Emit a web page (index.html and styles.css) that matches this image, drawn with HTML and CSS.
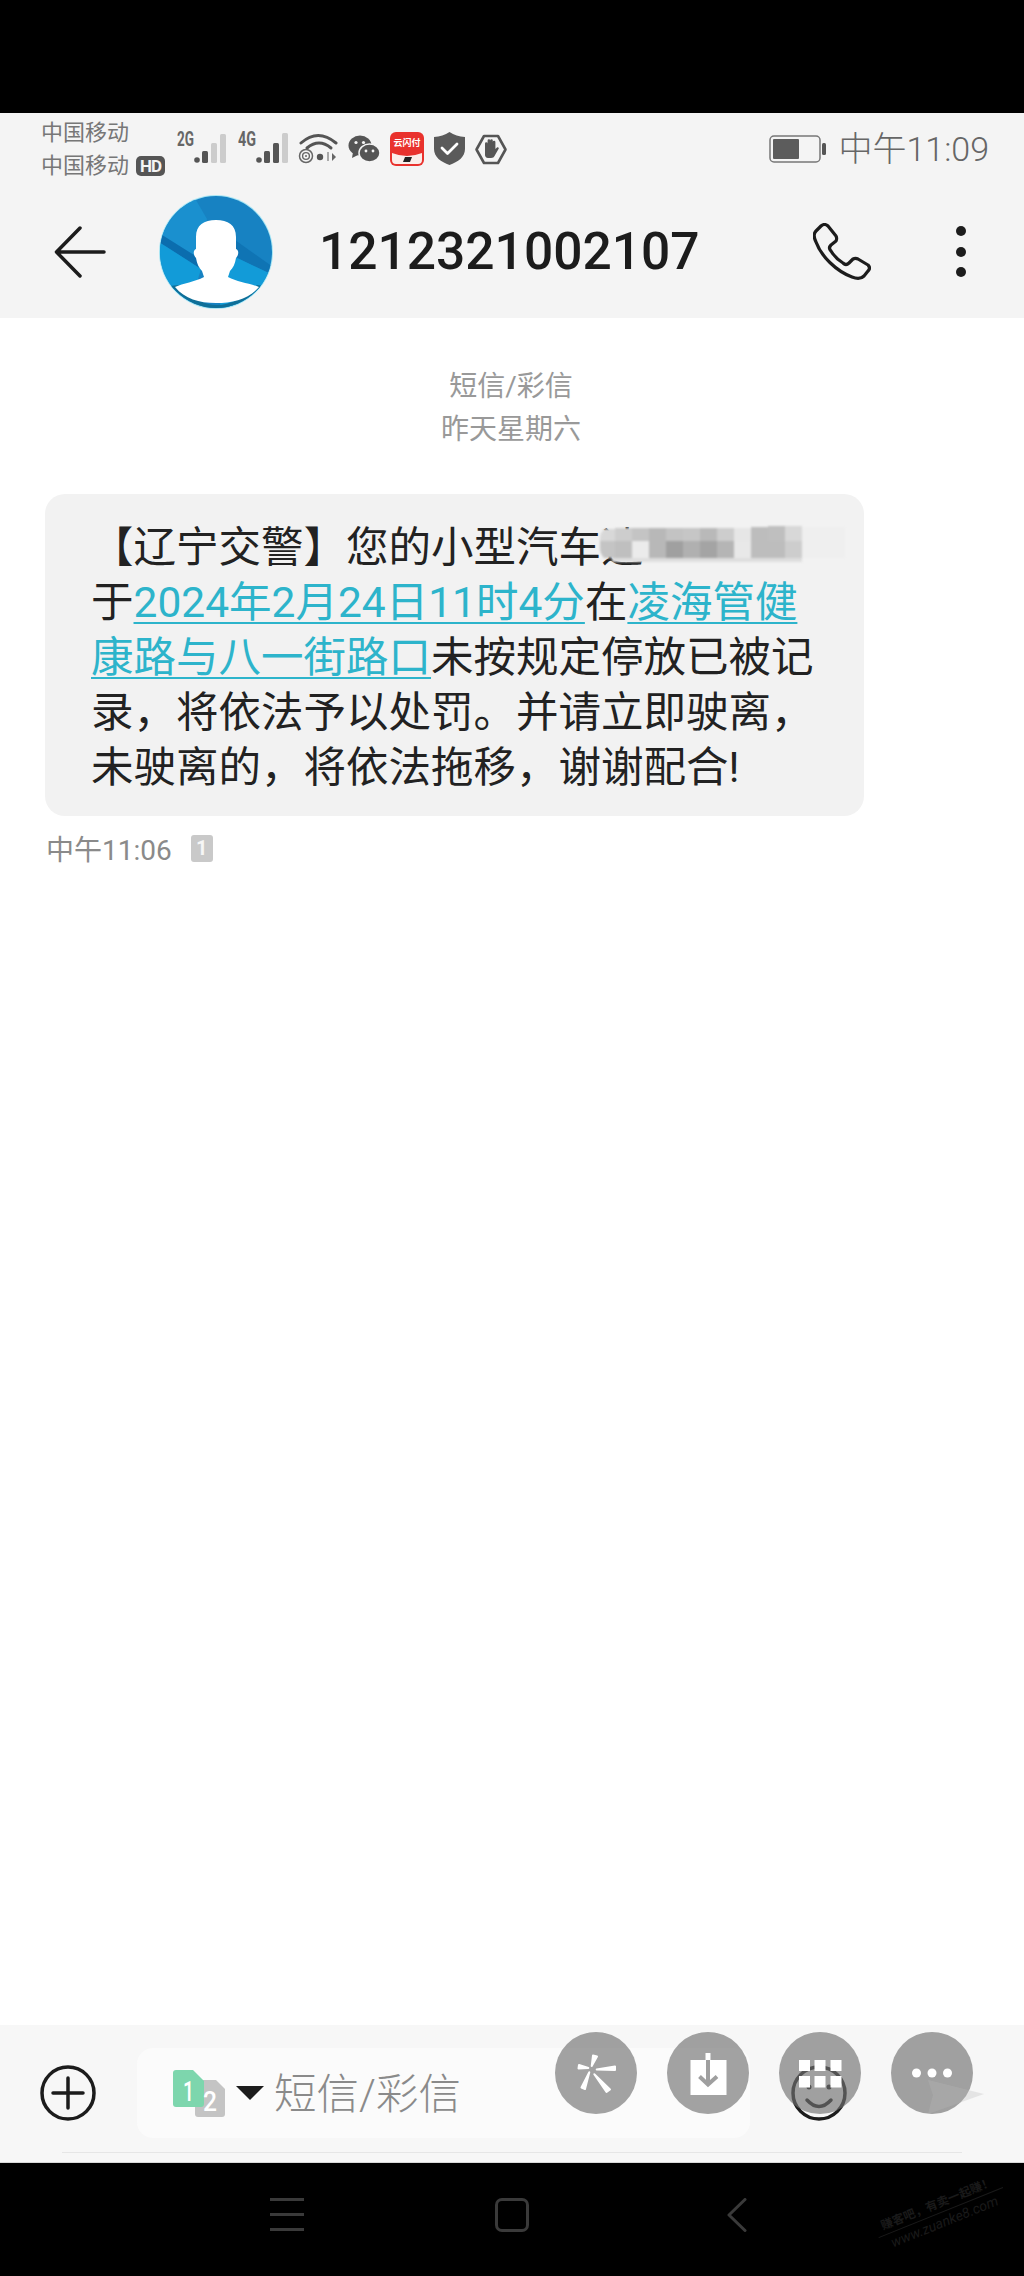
FILE: index.html
```html
<!DOCTYPE html>
<html lang="zh-CN">
<head>
<meta charset="utf-8">
<title>短信/彩信</title>
<link rel="stylesheet" href="styles.css">
</head>
<body>
<div class="page">
  <div class="top-black"></div>

  <div class="status">
    <div class="carriers">
      <div class="carrier">中国移动</div>
      <div class="carrier">中国移动<span class="hd">HD</span></div>
    </div>
    <div class="status-icons">
      <svg class="i-sig" viewBox="0 -8 51 44">
        <text class="net" x="0" y="17" textLength="17" lengthAdjust="spacingAndGlyphs">2G</text>
        <circle cx="20" cy="31" r="2.800" fill="#555"/>
        <rect x="25" y="22" width="6" height="12" rx="1.500" fill="#555"/>
        <rect x="34" y="14" width="6" height="20" rx="1.500" fill="#ccc"/>
        <rect x="43" y="5" width="6" height="29" rx="1.500" fill="#ccc"/>
      </svg>
      <svg class="i-sig2" viewBox="0 -8 50 44">
        <text class="net" x="0" y="17" textLength="18" lengthAdjust="spacingAndGlyphs">4G</text>
        <circle cx="21" cy="31" r="2.800" fill="#555"/>
        <rect x="26" y="22" width="6" height="12" rx="1.500" fill="#555"/>
        <rect x="35" y="14" width="6" height="20" rx="1.500" fill="#555"/>
        <rect x="44" y="4" width="6" height="30" rx="1.500" fill="#ccc"/>
      </svg>
      <svg class="i-wifi" viewBox="0 0 40 32">
        <path d="M3 11Q20 -4 38 11" fill="none" stroke="#555" stroke-width="3" stroke-linecap="round"/>
        <path d="M9 16Q21 6 33 16" fill="none" stroke="#555" stroke-width="3" stroke-linecap="round"/>
        <circle cx="8" cy="24" r="6.500" fill="none" stroke="#666" stroke-width="1.500"/>
        <circle cx="8" cy="24" r="3.400" fill="none" stroke="#666" stroke-width="1.400"/>
        <circle cx="8" cy="24" r="1" fill="#666"/>
        <circle cx="22" cy="25" r="3.200" fill="#555"/>
        <path d="M30 20v9" stroke="#aaa" stroke-width="2"/>
        <path d="M34 21l4 4-4 4z" fill="#666"/>
      </svg>
      <svg class="i-chat" viewBox="0 0 32 28">
        <ellipse cx="12" cy="10.500" rx="11.500" ry="10" fill="#555"/>
        <path d="M5 17l-1 6 6-3z" fill="#555"/>
        <ellipse cx="21.500" cy="18" rx="10.500" ry="9" fill="#555" stroke="#f4f4f4" stroke-width="1.500"/>
        <circle cx="8" cy="7.500" r="1.600" fill="#f4f4f4"/>
        <circle cx="15.500" cy="7.500" r="1.600" fill="#f4f4f4"/>
        <circle cx="18" cy="16" r="1.400" fill="#f4f4f4"/>
        <circle cx="25" cy="16" r="1.400" fill="#f4f4f4"/>
      </svg>
      <svg class="i-pay" viewBox="0 0 34 34">
        <rect width="34" height="34" rx="6" fill="#e9322d"/>
        <path d="M2 21Q17 27 32 21V28Q32 32 28 32H6Q2 32 2 28Z" fill="#fbeeea"/>
        <text class="pay" x="17" y="14" text-anchor="middle">云闪付</text>
        <path d="M13 30l2-5h7l-2 5z" fill="#222"/>
      </svg>
      <svg class="i-shield" viewBox="0 0 31 33">
        <path d="M15.500 0C20 3 25 4.500 31 5V17C31 25 24 30 15.500 33C7 30 0 25 0 17V5C6 4.500 11 3 15.500 0Z" fill="#5a5a5a"/>
        <path d="M8 16l5.500 5.500L23 12" fill="none" stroke="#fff" stroke-width="2.800" stroke-linecap="round" stroke-linejoin="round"/>
      </svg>
      <svg class="i-stop" viewBox="0 0 32 31">
        <path d="M9 2H23L30.500 15.500L23 29H9L1.500 15.500Z" fill="none" stroke="#555" stroke-width="2.600" stroke-linejoin="round"/>
        <path d="M10 9.500a1.300 1.300 0 0 1 2.600 0V6.500a1.300 1.300 0 0 1 2.600 0a1.300 1.300 0 0 1 2.600 0V8a1.300 1.300 0 0 1 2.600 0V15l1.600-1.500c1.200-1 2.500.5 1.500 1.600L19.500 22C19 23 18 24 16 24H13C11 24 10 22.500 10 21Z" fill="#555"/>
      </svg>
    </div>
    <div class="status-right">
      <svg class="i-batt" viewBox="0 0 58 28">
        <rect x="1" y="1" width="50" height="26" rx="4" fill="none" stroke="#777" stroke-width="1.500"/>
        <rect x="4" y="4" width="26" height="20" rx="1" fill="#5c5c5c"/>
        <rect x="53" y="8" width="4" height="12" rx="1.500" fill="#555"/>
      </svg>
      <span class="clock">中午11:09</span>
    </div>
  </div>

  <header class="head">
    <svg class="i-back" viewBox="0 0 52 52">
      <path d="M50 26H3M26 2L2.500 26L26 50" fill="none" stroke="#1c1c1c" stroke-width="3.500" stroke-linecap="round" stroke-linejoin="round"/>
    </svg>
    <svg class="avatar" viewBox="0 0 114 114">
      <defs>
        <clipPath id="disc"><circle cx="57" cy="57" r="56"/></clipPath>
      </defs>
      <circle cx="57" cy="57" r="57" fill="#a8e6f4"/>
      <g clip-path="url(#disc)">
        <rect width="114" height="114" fill="#1782c2"/>
        <path d="M0 38L34 0H0Z" fill="#1a90cf"/>
        <path d="M34 0L48 24L38 62L0 38Z" fill="#1a90cf"/>
        <path d="M0 38L38 62L42 74L0 47Z" fill="#0b6dae"/>
        <path d="M76 45L114 72V80L72 60Z" fill="#0f74b4"/>
        <path d="M0 47L42 74L30 114H0Z" fill="#129bd8"/>
        <path d="M72 60L114 80V114H60Z" fill="#129bd8"/>
        <path d="M0 92L20 90Q57 130 98 90L114 92V114H0Z" fill="#0f6f98"/>
        <path d="M57 25C45 25 37 30 37 42V54C34 55 34 60 37 63C38 69 40 73 43 76L45 82C36 87 24 88 16 92C26 104 40 108 57 108C74 108 90 104 100 92C90 88 78 87 69 82L71 76C74 73 76 69 77 63C80 60 80 55 77 54V42C77 30 69 25 57 25Z" fill="#fff"/>
      </g>
    </svg>
    <h1 class="title">1212321002107</h1>
    <svg class="i-phone" viewBox="0 0 58 58">
      <path d="M8 3L3 8C0 11 1 15 3 19C8 33 23 48 39 54C44 56 48 56 51 53L55 48C57 46 57 44 55 42L45 36C43 35 42 35 40 36L36 40C34 42 32 42 30 40C25 37 21 33 18 28C16 26 16 24 18 22L23 18C24 16 24 15 23 13L15 3C13 1 10 1 8 3Z" fill="none" stroke="#1c1c1c" stroke-width="3.200" stroke-linejoin="round"/>
    </svg>
    <div class="more"><i></i><i></i><i></i></div>
  </header>

  <main class="thread">
    <div class="meta">短信/彩信</div>
    <div class="meta">昨天星期六</div>
    <div class="bubble">
      <span class="line">【辽宁交警】您的小型汽车违</span>
      <span class="line">于<a class="lnk">2024年2月24日11时4分</a>在<a class="lnk">凌海管健</a></span>
      <span class="line"><a class="lnk">康路与八一街路口</a>未按规定停放已被记</span>
      <span class="line">录，将依法予以处罚。并请立即驶离，</span>
      <span class="line">未驶离的，将依法拖移，谢谢配合!</span>
      <svg class="mosaic" viewBox="0 0 245 37">
        <rect x="0" y="4" width="15" height="12" fill="#d8d8d8"/><rect x="15" y="3" width="17" height="13" fill="#cdcdcd"/><rect x="32" y="3" width="17" height="13" fill="#c4c4c4"/><rect x="49" y="3" width="17" height="13" fill="#b8b8b8"/><rect x="66" y="3" width="17" height="13" fill="#c3c3c3"/><rect x="83" y="3" width="17" height="13" fill="#c6c6c6"/><rect x="100" y="3" width="17" height="13" fill="#b9b9b9"/><rect x="117" y="3" width="17" height="13" fill="#cdcdcd"/><rect x="134" y="3" width="17" height="13" fill="#e6e6e6"/><rect x="151" y="2" width="17" height="14" fill="#bdbdbd"/><rect x="168" y="1" width="17" height="15" fill="#bfbfbf"/><rect x="185" y="1" width="17" height="15" fill="#d8d8d8"/>
        <rect x="0" y="16" width="15" height="17" fill="#c4c4c4"/><rect x="15" y="16" width="17" height="17" fill="#bfbfbf"/><rect x="32" y="16" width="17" height="17" fill="#ebebeb"/><rect x="49" y="16" width="17" height="17" fill="#b8b8b8"/><rect x="66" y="16" width="17" height="17" fill="#a0a0a0"/><rect x="83" y="16" width="17" height="17" fill="#b0b0b0"/><rect x="100" y="16" width="17" height="17" fill="#a4a4a4"/><rect x="117" y="16" width="17" height="17" fill="#b5b5b5"/><rect x="134" y="16" width="17" height="17" fill="#e8e8e8"/><rect x="151" y="16" width="17" height="17" fill="#bdbdbd"/><rect x="168" y="16" width="17" height="17" fill="#bdbdbd"/><rect x="185" y="16" width="17" height="17" fill="#cdcdcd"/>
        <rect x="12" y="33" width="190" height="4" fill="#dedede"/>
        <rect x="202" y="2" width="43" height="31" fill="#efefef"/>
      </svg>
    </div>
    <div class="stamp">
      <span>中午11:06</span>
      <span class="sim-tag">1</span>
    </div>
  </main>

  <footer class="composer">
    <div class="composer-row">
      <svg class="i-plus" viewBox="0 0 56 56">
        <circle cx="28" cy="28" r="26" fill="none" stroke="#1c1c1c" stroke-width="3.500"/>
        <path d="M28 13V43M13 28H43" stroke="#1c1c1c" stroke-width="3.500" stroke-linecap="round"/>
      </svg>
      <div class="input">
        <svg class="i-sim" viewBox="0 0 52 47">
          <path d="M25 10H43L52 19V44Q52 47 49 47H25Q22 47 22 44V13Q22 10 25 10Z" fill="#c4c4c4"/>
          <path d="M3 0H20L31 11V34Q31 37 28 37H3Q0 37 0 34V3Q0 0 3 0Z" fill="#7dd6ad"/>
          <text class="simn" x="10" y="31" textLength="11" lengthAdjust="spacingAndGlyphs">1</text>
          <text class="simn" x="30" y="41" textLength="14" lengthAdjust="spacingAndGlyphs">2</text>
        </svg>
        <span class="caret"></span>
        <span class="hint">短信/彩信</span>
      </div>
      <svg class="i-smile" viewBox="0 0 56 56">
        <circle cx="28" cy="28" r="26" fill="none" stroke="#1c1c1c" stroke-width="3.500"/>
        <path d="M16 35Q28 48 40 35" fill="none" stroke="#1c1c1c" stroke-width="3.500" stroke-linecap="round"/>
        <circle cx="18" cy="22" r="2.500" fill="#1c1c1c"/>
        <circle cx="38" cy="22" r="2.500" fill="#1c1c1c"/>
      </svg>
    </div>
    <div class="rule"></div>

    <div class="quick">
      <svg class="qbtn" viewBox="0 0 82 82">
        <circle cx="41" cy="41" r="41" class="qbg"/>
        <g fill="#fff" stroke="#fff" stroke-width="2" stroke-linejoin="round">
          <path d="M36.700 34L38 23.500L42 24.500Z"/>
          <path d="M41.700 37.500L60 34.500V38Z"/>
          <path d="M39.300 42.300L51.500 60L55 57.500Z"/>
          <path d="M34.300 40.300L26.500 55.500L30 57Z"/>
          <path d="M33.300 36L24 33L23.500 36.500Z"/>
        </g>
      </svg>
      <svg class="qbtn" viewBox="0 0 82 82">
        <circle cx="41" cy="41" r="41" class="qbg"/>
        <rect x="23.500" y="28" width="36" height="35" fill="#fff"/>
        <path d="M41 21V29" stroke="#fff" stroke-width="5"/>
        <path d="M41 28V52M32.500 44.500L41 52.500L50 44.500" fill="none" stroke="#9f9f9f" stroke-width="4"/>
      </svg>
      <svg class="qbtn" viewBox="0 0 82 82">
        <circle cx="41" cy="41" r="41" class="qbg"/>
        <rect x="20" y="28" width="11" height="11" fill="#fff"/><rect x="35.500" y="28" width="11" height="11" fill="#fff"/><rect x="51.500" y="28" width="11" height="11" fill="#fff"/>
        <rect x="20" y="44" width="11" height="11.500" fill="#fff"/><rect x="35.500" y="44" width="11" height="11.500" fill="#fff"/><rect x="51.500" y="44" width="11" height="11.500" fill="#fff"/>
      </svg>
      <svg class="qbtn" viewBox="0 0 82 82">
        <circle cx="41" cy="41" r="41" class="qbg"/>
        <circle cx="25.500" cy="41" r="4.500" fill="#fff"/><circle cx="41" cy="41" r="4.500" fill="#fff"/><circle cx="56.500" cy="41" r="4.500" fill="#fff"/>
      </svg>
    </div>
    <svg class="i-send" viewBox="0 0 56 34">
      <path d="M0 0L56 14L0 34L5 15Z" fill="#bababa" fill-opacity=".3"/>
    </svg>
  </footer>

  <nav class="nav">
    <div class="nav-menu"><i></i><i></i><i></i></div>
    <div class="nav-home"></div>
    <svg class="nav-back" viewBox="0 0 20 34">
      <path d="M18 1.500L2 17L18 32.500" fill="none" stroke="#3a3a3a" stroke-width="3" stroke-linecap="round" stroke-linejoin="round"/>
    </svg>
    <div class="mark">
      <div class="mark-a">赚客吧，有卖一起赚！</div>
      <div class="mark-b">www.zuanke8.com</div>
    </div>
  </nav>
</div>
</body>
</html>
```

FILE: styles.css
```css
* { box-sizing: border-box; }
html, body { margin: 0; padding: 0; background: #000; }
body { font-family: Roboto, "Noto Sans CJK SC", "Noto Sans", sans-serif; }
.page { width: 1024px; height: 2276px; display: flex; flex-direction: column; overflow: hidden; position: relative; }

.top-black { height: 113px; background: #000; flex: none; }

/* status bar */
.status { height: 72px; flex: none; background: #f4f4f4; display: flex; align-items: flex-start; padding: 3px 35px 0 41px; }
.carriers { width: 136px; flex: none; color: #777; font-size: 22px; }
.carrier { height: 33px; line-height: 33px; display: flex; align-items: center; white-space: nowrap; }
.hd { display: inline-block; margin-left: 7px; width: 29px; height: 20px; line-height: 20px; background: #555; color: #f4f4f4; border-radius: 5px; font-size: 17px; font-weight: 700; text-align: center; letter-spacing: -1px; }
.status-icons { display: flex; gap: 10px; align-items: flex-start; margin-top: 16px; flex: none; }
.status-icons svg { display: block; flex: none; }
.i-sig { width: 51px; height: 44px; margin-top: -11px; }
.i-sig2 { width: 50px; height: 44px; margin-top: -11px; }
.i-wifi { width: 40px; height: 32px; }
.i-chat { width: 32px; height: 28px; margin-top: 3px; }
.i-pay { width: 34px; height: 34px; }
.i-shield { width: 31px; height: 33px; }
.i-stop { width: 32px; height: 31px; margin-top: 2px; }
.net { font: 700 21px Roboto, sans-serif; fill: #666; }
.pay { font: 700 9px "Noto Sans CJK SC", sans-serif; fill: #fff; }
.status-right { margin-left: auto; display: flex; align-items: center; gap: 11px; margin-top: 13px; }
.i-batt { width: 58px; height: 28px; display: block; }
.clock { font-size: 34px; font-weight: 300; color: #666; line-height: 40px; white-space: nowrap; }

/* title bar */
.head { height: 133px; flex: none; background: #f4f4f4; display: flex; align-items: center; padding: 0 58px 0 54px; }
.i-back { width: 52px; height: 52px; flex: none; margin-right: 53px; }
.avatar { width: 114px; height: 114px; flex: none; margin-right: 46px; }
.title { margin: 0; flex: 1; font-size: 51.500px; font-weight: 500; color: #1c1c1c; line-height: 60px; }
.i-phone { width: 58px; height: 58px; flex: none; margin-right: 85px; }
.more { width: 10px; display: flex; flex-direction: column; gap: 10.500px; flex: none; }
.more i { display: block; width: 10px; height: 10px; border-radius: 50%; background: #1c1c1c; }

/* thread */
.thread { flex: 1; background: #fff; padding-top: 47px; }
.meta { text-align: center; font-size: 28px; line-height: 43px; color: #999; margin-left: -2px; }
.bubble { position: relative; margin: 43px 0 0 45px; width: 819px; height: 322px; padding: 26px 0 0 46px; background: #f2f2f2; border-radius: 20px; font-size: 42.500px; color: #222; overflow: hidden; }
.line { display: block; height: 55px; line-height: 55px; white-space: nowrap; }
.lnk { color: #2db4cb; text-decoration: underline; text-decoration-thickness: 2px; text-underline-offset: 5px; }
.mosaic { position: absolute; left: 555px; top: 31px; width: 245px; height: 37px; border-radius: 14px 0 0 14px; filter: blur(1px); }
.stamp { display: flex; align-items: center; gap: 19px; margin: 12px 0 0 46px; height: 40px; font-size: 28px; color: #8a8a8a; }
.sim-tag { width: 22px; height: 27px; background: #c9c9c9; color: #f6f6f6; font-size: 20px; font-weight: 700; line-height: 27px; text-align: center; border-radius: 3px; }

/* composer */
.composer { position: relative; height: 137px; flex: none; background: #f7f7f7; padding: 23px 0 0 40px; }
.composer-row { display: flex; align-items: center; height: 90px; }
.i-plus { width: 56px; height: 56px; flex: none; margin-right: 41px; }
.input { width: 613px; height: 90px; flex: none; background: #fbfbfb; border-radius: 16px; display: flex; align-items: center; padding-left: 36px; }
.i-sim { width: 52px; height: 47px; flex: none; margin-right: 11px; }
.simn { font: 500 27px Roboto, sans-serif; fill: #fff; }
.caret { width: 0; height: 0; flex: none; margin-right: 10px; border-left: 14px solid transparent; border-right: 14px solid transparent; border-top: 14px solid #1c1c1c; }
.hint { font-size: 42.500px; color: #8a8a8a; font-weight: 300; line-height: 50px; padding-top: 4px; }
.i-smile { width: 56px; height: 56px; flex: none; margin-left: 41px; }
.rule { height: 1px; width: 900px; margin: 14px 0 0 22px; background: #e6e6e6; }

.quick { position: absolute; left: 555px; top: 7px; display: flex; gap: 30px; }
.qbtn { width: 82px; height: 82px; display: block; flex: none; }
.qbg { fill: #717171; fill-opacity: .65; }
.i-send { position: absolute; left: 928px; top: 55px; width: 56px; height: 34px; }

/* nav bar */
.nav { position: relative; height: 114px; flex: none; background: #000; display: flex; align-items: flex-start; padding: 35px 0 0 270px; border-top: 1px solid #d8d8d8; }
.nav-menu { width: 34px; flex: none; display: flex; flex-direction: column; gap: 12px; margin-right: 191px; }
.nav-menu i { display: block; height: 3px; background: #3a3a3a; }
.nav-home { width: 34px; height: 34px; flex: none; border: 3px solid #3a3a3a; border-radius: 7px; margin-right: 198px; }
.nav-back { width: 20px; height: 34px; flex: none; }
.mark { position: absolute; left: 874px; top: 32px; width: 134px; transform: rotate(-22deg); color: #1a1a1a; text-align: center; }
.mark-a { font-size: 12px; font-weight: 700; line-height: 17px; border-bottom: 1px solid #1a1a1a; white-space: nowrap; }
.mark-b { font-size: 14px; font-weight: 400; font-style: italic; line-height: 18px; white-space: nowrap; }
```
